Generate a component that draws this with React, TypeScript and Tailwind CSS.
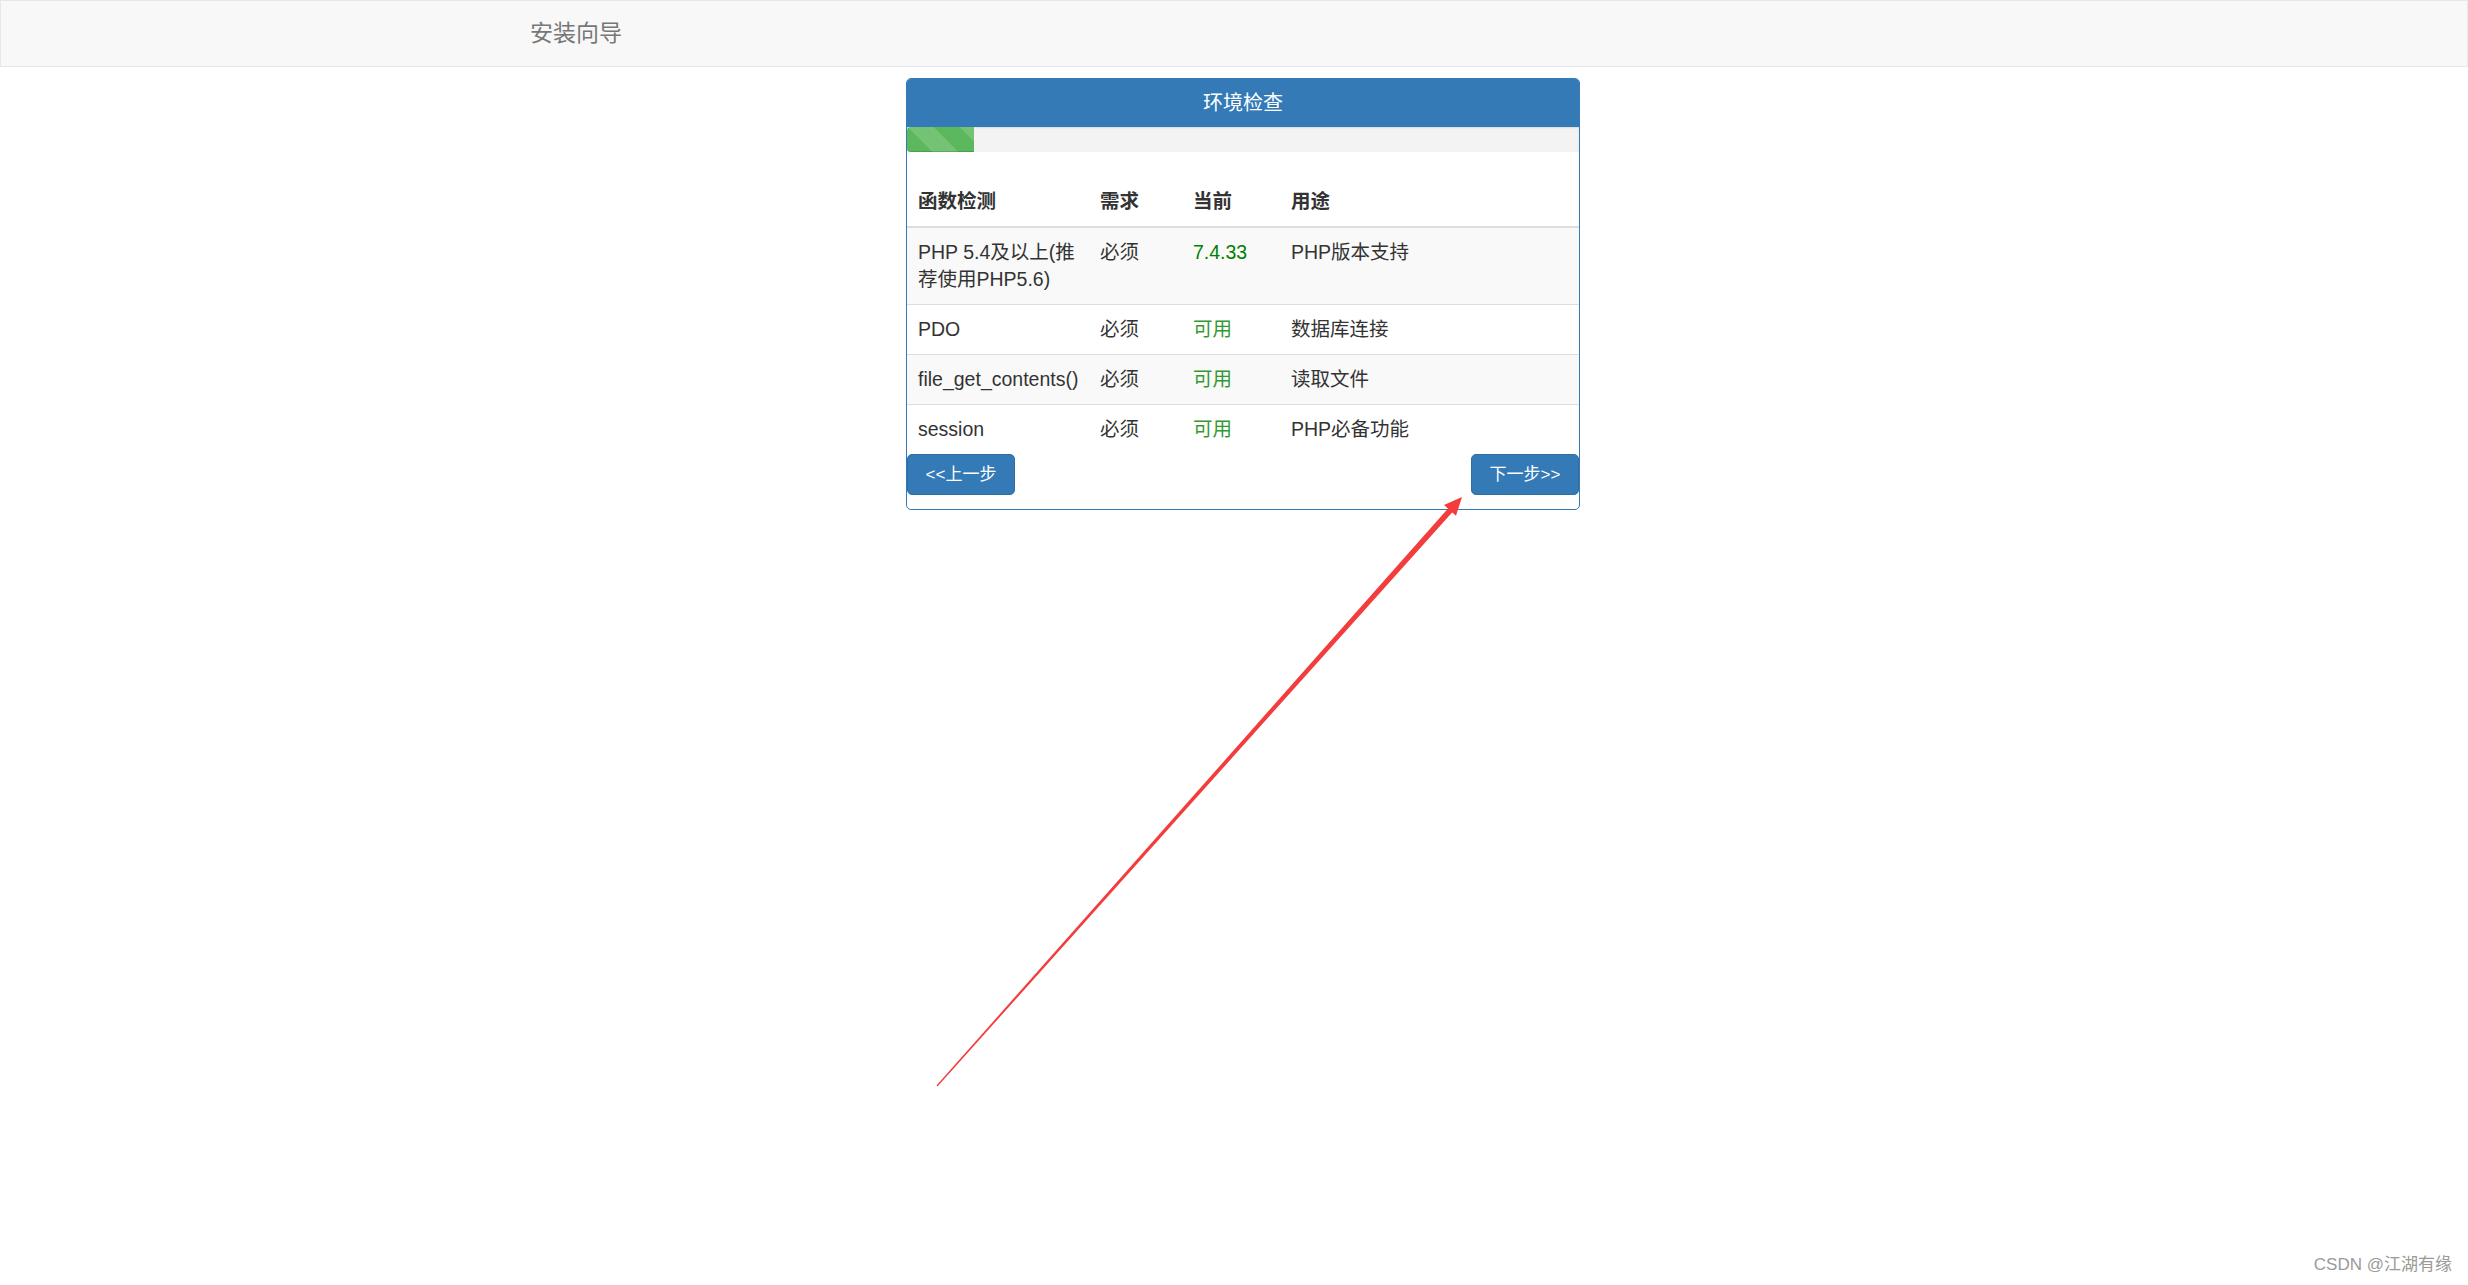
import React from 'react'

const rows = [
  { name: 'PHP 5.4及以上(推荐使用PHP5.6)', need: '必须', current: '7.4.33', ok: false, use: 'PHP版本支持' },
  { name: 'PDO', need: '必须', current: '可用', ok: true, use: '数据库连接' },
  { name: 'file_get_contents()', need: '必须', current: '可用', ok: true, use: '读取文件' },
  { name: 'session', need: '必须', current: '可用', ok: true, use: 'PHP必备功能' },
]

export default function App() {
  return (
    <div className="relative min-h-[1285px] bg-white font-['Liberation_Sans','Noto_Sans_CJK_SC',sans-serif] text-[#333]">
      {/* Navbar */}
      <div className="h-[67px] bg-[#f8f8f8] border border-[#e7e7e7]">
        <div className="w-[1462px] mx-auto h-full flex items-center pl-[27px]">
          <span className="text-[23px] text-[#777]">安装向导</span>
        </div>
      </div>

      {/* Panel */}
      <div className="ml-[906px] mt-[11px] w-[674px] border border-[#337ab7] rounded-[5px] overflow-hidden pb-[14px]">
        <div className="h-[48px] bg-[#337ab7] flex items-center justify-center text-white text-[20px]">
          环境检查
        </div>

        <div className="h-[25px] bg-[#f3f3f3] shadow-[inset_0_1px_2px_rgba(0,0,0,0.1)] flex">
          <div className="w-[67px] h-full rounded-l-[4px] bg-[#5cb85c] bg-[linear-gradient(45deg,rgba(255,255,255,.15)_25%,transparent_25%,transparent_50%,rgba(255,255,255,.15)_50%,rgba(255,255,255,.15)_75%,transparent_75%,transparent)] bg-[length:52px_52px] shadow-[inset_0_-1px_0_rgba(0,0,0,0.15)]" />
        </div>

        <table className="mt-[25px] w-full table-fixed border-collapse text-[19.5px] leading-[27px]">
          <colgroup>
            <col className="w-[182px]" />
            <col className="w-[93px]" />
            <col className="w-[98px]" />
            <col />
          </colgroup>
          <thead>
            <tr>
              {['函数检测', '需求', '当前', '用途'].map(h => (
                <th key={h} className="text-left font-bold px-[11px] py-[11px] border-b-2 border-[#ddd] align-bottom">{h}</th>
              ))}
            </tr>
          </thead>
          <tbody>
            {rows.map((r, i) => (
              <tr key={r.name} className={i % 2 === 0 ? 'bg-[#f9f9f9]' : ''}>
                <td className="px-[11px] py-[11px] border-t border-[#ddd] align-top">{r.name}</td>
                <td className="px-[11px] py-[11px] border-t border-[#ddd] align-top">{r.need}</td>
                <td className={`px-[11px] py-[11px] border-t border-[#ddd] align-top ${r.ok ? 'text-[#339933]' : 'text-[#008000]'}`}>{r.current}</td>
                <td className="px-[11px] py-[11px] border-t border-[#ddd] align-top">{r.use}</td>
              </tr>
            ))}
          </tbody>
        </table>

        <div className="flex justify-between">
          <button className="w-[108px] h-[41px] bg-[#337ab7] border border-[#2e6da4] rounded-[5px] text-white text-[17px]">
            &lt;&lt;上一步
          </button>
          <button className="w-[108px] h-[41px] bg-[#337ab7] border border-[#2e6da4] rounded-[5px] text-white text-[17px]">
            下一步&gt;&gt;
          </button>
        </div>
      </div>

      {/* annotation arrow */}
      <svg className="absolute top-0 left-0 pointer-events-none" width="2468" height="1285">
        <polygon points="936.5,1085.5 937.5,1086.5 1454.8,509.4 1450.6,505.6" fill="#f33c3c" />
        <polygon points="1462,497 1456,515.8 1444,505.1" fill="#f33c3c" />
      </svg>

      {/* watermark */}
      <div className="absolute right-[16px] bottom-[8px] text-[17px] text-[#9a9a9a]">CSDN @江湖有缘</div>
    </div>
  )
}
